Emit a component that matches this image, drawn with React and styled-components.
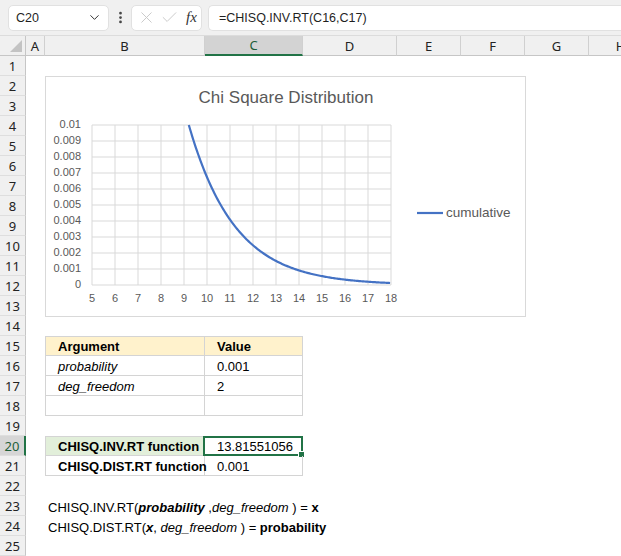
import React from "react";
import styled, { createGlobalStyle, css } from "styled-components";
import { ChevronDown, EllipsisVertical, X, Check } from "lucide-react";

const GlobalStyle = createGlobalStyle`
  html, body {
    margin: 0;
    padding: 0;
    background: #ffffff;
  }
  body {
    font-family: "Liberation Sans", Arial, sans-serif;
  }
`;

const COLS = ["A", "B", "C", "D", "E", "F", "G", "H"];
const TEMPLATE = "26px 19px 160px 98px 94px 64px 64px 64px 64px";

const Frame = styled.div`
  width: 621px;
  height: 556px;
  overflow: hidden;
  background: #fff;
`;

const FormulaBar = styled.div`
  height: 36px;
  box-sizing: border-box;
  background: #f0f0f0;
  display: flex;
  align-items: center;
  padding: 0 0 0 8px;
  border-bottom: 1px solid #dcdcdc;
`;

const NameBox = styled.div`
  width: 101px;
  height: 26px;
  box-sizing: border-box;
  background: #fff;
  border: 1px solid #e1e1e1;
  border-radius: 5px;
  display: flex;
  align-items: center;
  justify-content: space-between;
  padding: 0 6px 0 7px;
  font-size: 12.5px;
  color: #1f1f1f;
`;

const Dots = styled.div`
  width: 22px;
  display: flex;
  justify-content: center;
  color: #444;
`;

const FxBox = styled.div`
  width: 71px;
  height: 26px;
  box-sizing: border-box;
  background: #fff;
  border: 1px solid #e1e1e1;
  border-radius: 5px;
  display: flex;
  align-items: center;
  gap: 4px;
  padding: 0 4px 0 5px;
  color: #c8c8c8;
`;

const Fx = styled.span`
  font-family: "Liberation Serif", "Times New Roman", serif;
  font-style: italic;
  font-size: 15px;
  color: #333;
  margin-left: 3px;
`;

const FormulaInput = styled.div`
  flex: 1;
  height: 26px;
  margin-left: 6px;
  box-sizing: border-box;
  background: #fff;
  border: 1px solid #e1e1e1;
  border-right: none;
  border-radius: 5px 0 0 5px;
  display: flex;
  align-items: center;
  padding-left: 10px;
  font-size: 12.5px;
  color: #1f1f1f;
`;

const Sheet = styled.div`
  position: relative;
`;

const Row = styled.div`
  display: grid;
  grid-template-columns: ${TEMPLATE};
  height: 20px;
`;

const HeaderRow = styled(Row)`
  background: #f0f0f0;
  font-family: "Noto Sans", "Liberation Sans", sans-serif;
  font-size: 13px;
  color: #222;
  overflow: hidden;
`;

const Corner = styled.div`
  position: relative;
  border-right: 1px solid #c6c6c6;
  border-bottom: 1px solid #c6c6c6;
  box-sizing: border-box;
  &::after {
    content: "";
    position: absolute;
    right: 3px;
    bottom: 3px;
    border-style: solid;
    border-width: 0 0 12px 12px;
    border-color: transparent transparent #c3c3c3 transparent;
  }
`;

const ColHead = styled.div`
  display: flex;
  align-items: center;
  justify-content: center;
  box-sizing: border-box;
  border-right: 1px solid #d0d0d0;
  border-bottom: 1px solid #c6c6c6;
  ${(p) =>
    p.$active &&
    css`
      background: #d3d3d3;
      color: #1e5e38;
      border-bottom: 2px solid #217346;
    `}
`;

const RowHead = styled.div`
  display: flex;
  align-items: center;
  justify-content: center;
  box-sizing: border-box;
  padding-top: 1px;
  background: #f0f0f0;
  border-right: 1px solid #c6c6c6;
  border-bottom: 1px solid #dedede;
  font-family: "Noto Sans", "Liberation Sans", sans-serif;
  font-size: 13px;
  color: #222;
  ${(p) =>
    p.$active &&
    css`
      background: #d6d6d6;
      color: #1e5e38;
      border-right: 2px solid #217346;
    `}
`;

const Cell = styled.div`
  position: relative;
  box-sizing: border-box;
  display: flex;
  align-items: flex-end;
  padding: 0 0 1px ${(p) => (p.$indent ? "12px" : "3px")};
  font-size: 13px;
  color: #000;
  white-space: nowrap;
  overflow: visible;
  background: ${(p) => p.$bg || "transparent"};
  font-weight: ${(p) => (p.$bold ? 700 : 400)};
  font-style: ${(p) => (p.$italic ? "italic" : "normal")};
  ${(p) =>
    p.$boxed &&
    css`
      border-right: 1px solid #d4d4d4;
      border-bottom: 1px solid #d4d4d4;
    `}
  ${(p) => p.$left && css`border-left: 1px solid #d4d4d4;`}
  ${(p) => p.$top && css`border-top: 1px solid #d4d4d4;`}
`;

const CellText = styled.span`
  white-space: pre;
`;

const Selection = styled.div`
  position: absolute;
  left: -2px;
  top: -1px;
  right: -1px;
  bottom: -1px;
  border: 2px solid #217346;
  pointer-events: none;
  &::after {
    content: "";
    position: absolute;
    right: -4px;
    bottom: -4px;
    width: 5px;
    height: 5px;
    background: #217346;
    border: 1px solid #fff;
  }
`;

const B = styled.b`
  font-weight: 700;
`;
const I = styled.i`
  font-style: italic;
`;
const BI = styled.b`
  font-weight: 700;
  font-style: italic;
`;

const ChartBox = styled.div`
  position: absolute;
  left: 45px;
  top: 40px;
  width: 481px;
  height: 241px;
  box-sizing: border-box;
  border: 1px solid #d9d9d9;
  background: #fff;
`;

const PL = 46;
const PT = 48;
const PR = 345;
const PB = 208;
const xs = (v) => PL + ((v - 5) / 13) * (PR - PL);
const ys = (v) => PB - (v / 0.01) * (PB - PT);

function curvePath() {
  const pts = [];
  const start = -2 * Math.log(0.01);
  for (let x = start; x <= 18.0001; x += 0.05) {
    pts.push(`${xs(x).toFixed(2)},${ys(Math.exp(-x / 2)).toFixed(2)}`);
  }
  return "M" + pts.join(" L");
}

const FONT = "Liberation Sans, Arial, sans-serif";

const Chart = () => {
  const xt = Array.from({ length: 14 }, (_, i) => i + 5);
  const yt = Array.from({ length: 11 }, (_, i) => i);
  return (
    <ChartBox>
      <svg width="479" height="239" style={{ display: "block" }}>
        <text x="240" y="22" textAnchor="middle" dominantBaseline="middle" fontFamily={FONT} fontSize="17" fill="#595959">
          Chi Square Distribution
        </text>
        {xt.map((v) => (
          <line key={"vx" + v} x1={xs(v)} x2={xs(v)} y1={PT} y2={PB} stroke="#d9d9d9" strokeWidth="1" />
        ))}
        {yt.map((i) => (
          <line key={"hy" + i} x1={PL} x2={PR} y1={ys(i / 1000)} y2={ys(i / 1000)} stroke="#d9d9d9" strokeWidth="1" />
        ))}
        {yt.map((i) => (
          <text key={"ly" + i} x={PL - 11} y={ys(i / 1000)} textAnchor="end" dominantBaseline="middle" fontFamily={FONT} fontSize="11" fill="#595959">
            {i === 0 ? "0" : i === 10 ? "0.01" : "0.00" + i}
          </text>
        ))}
        {xt.map((v) => (
          <text key={"lx" + v} x={xs(v)} y={PB + 14} textAnchor="middle" dominantBaseline="middle" fontFamily={FONT} fontSize="11" fill="#595959">
            {v}
          </text>
        ))}
        <path d={curvePath()} fill="none" stroke="#4472c4" strokeWidth="2.2" />
        <line x1="371" x2="397" y1="136" y2="136" stroke="#4472c4" strokeWidth="2.2" />
        <text x="400" y="136" dominantBaseline="middle" fontFamily={FONT} fontSize="13.5" fill="#595959">
          cumulative
        </text>
      </svg>
    </ChartBox>
  );
};

// cell content per row: { B: {...}, C: {...} }
const rows = {
  15: {
    B: { text: "Argument", bold: true, bg: "#fff2cc", boxed: true, left: true, top: true, indent: true },
    C: { text: "Value", bold: true, bg: "#fff2cc", boxed: true, top: true, indent: true },
  },
  16: {
    B: { text: "probability", italic: true, boxed: true, left: true, indent: true },
    C: { text: "0.001", boxed: true, indent: true },
  },
  17: {
    B: { text: "deg_freedom", italic: true, boxed: true, left: true, indent: true },
    C: { text: "2", boxed: true, indent: true },
  },
  18: {
    B: { boxed: true, left: true },
    C: { boxed: true },
  },
  20: {
    B: { text: "CHISQ.INV.RT function", bold: true, bg: "#e2efda", boxed: true, left: true, top: true, indent: true },
    C: { text: "13.81551056", boxed: true, top: true, indent: true, selected: true },
  },
  21: {
    B: { text: "CHISQ.DIST.RT function", bold: true, boxed: true, left: true, indent: true },
    C: { text: "0.001", boxed: true, indent: true },
  },
  23: {
    B: {
      text: (
        <>
          {"CHISQ.INV.RT("}
          <BI>probability</BI>
          {" ,"}
          <I>deg_freedom</I>
          {" ) = "}
          <B>x</B>
        </>
      ),
    },
  },
  24: {
    B: {
      text: (
        <>
          {"CHISQ.DIST.RT("}
          <BI>x</BI>
          {", "}
          <I>deg_freedom</I>
          {" ) = "}
          <B>probability</B>
        </>
      ),
    },
  },
};

const SheetRow = ({ n }) => {
  const data = rows[n] || {};
  return (
    <Row>
      <RowHead $active={n === 20}>{n}</RowHead>
      {COLS.map((c) => {
        const d = data[c] || {};
        return (
          <Cell
            key={c}
            $bold={d.bold}
            $italic={d.italic}
            $bg={d.bg}
            $boxed={d.boxed}
            $left={d.left}
            $top={d.top}
            $indent={d.indent}
          >
            {d.text && <CellText>{d.text}</CellText>}
            {d.selected && <Selection />}
          </Cell>
        );
      })}
    </Row>
  );
};

export default function App() {
  return (
    <Frame>
      <GlobalStyle />
      <FormulaBar>
        <NameBox>
          <span>C20</span>
          <ChevronDown size={15} strokeWidth={1.6} color="#333" />
        </NameBox>
        <Dots>
          <EllipsisVertical size={15} strokeWidth={2.4} />
        </Dots>
        <FxBox>
          <X size={19} strokeWidth={1.2} />
          <Check size={19} strokeWidth={1.2} />
          <Fx>fx</Fx>
        </FxBox>
        <FormulaInput>=CHISQ.INV.RT(C16,C17)</FormulaInput>
      </FormulaBar>
      <Sheet>
        <HeaderRow>
          <Corner />
          {COLS.map((c) => (
            <ColHead key={c} $active={c === "C"}>
              {c}
            </ColHead>
          ))}
        </HeaderRow>
        {Array.from({ length: 25 }, (_, i) => (
          <SheetRow key={i} n={i + 1} />
        ))}
        <Chart />
      </Sheet>
    </Frame>
  );
}
